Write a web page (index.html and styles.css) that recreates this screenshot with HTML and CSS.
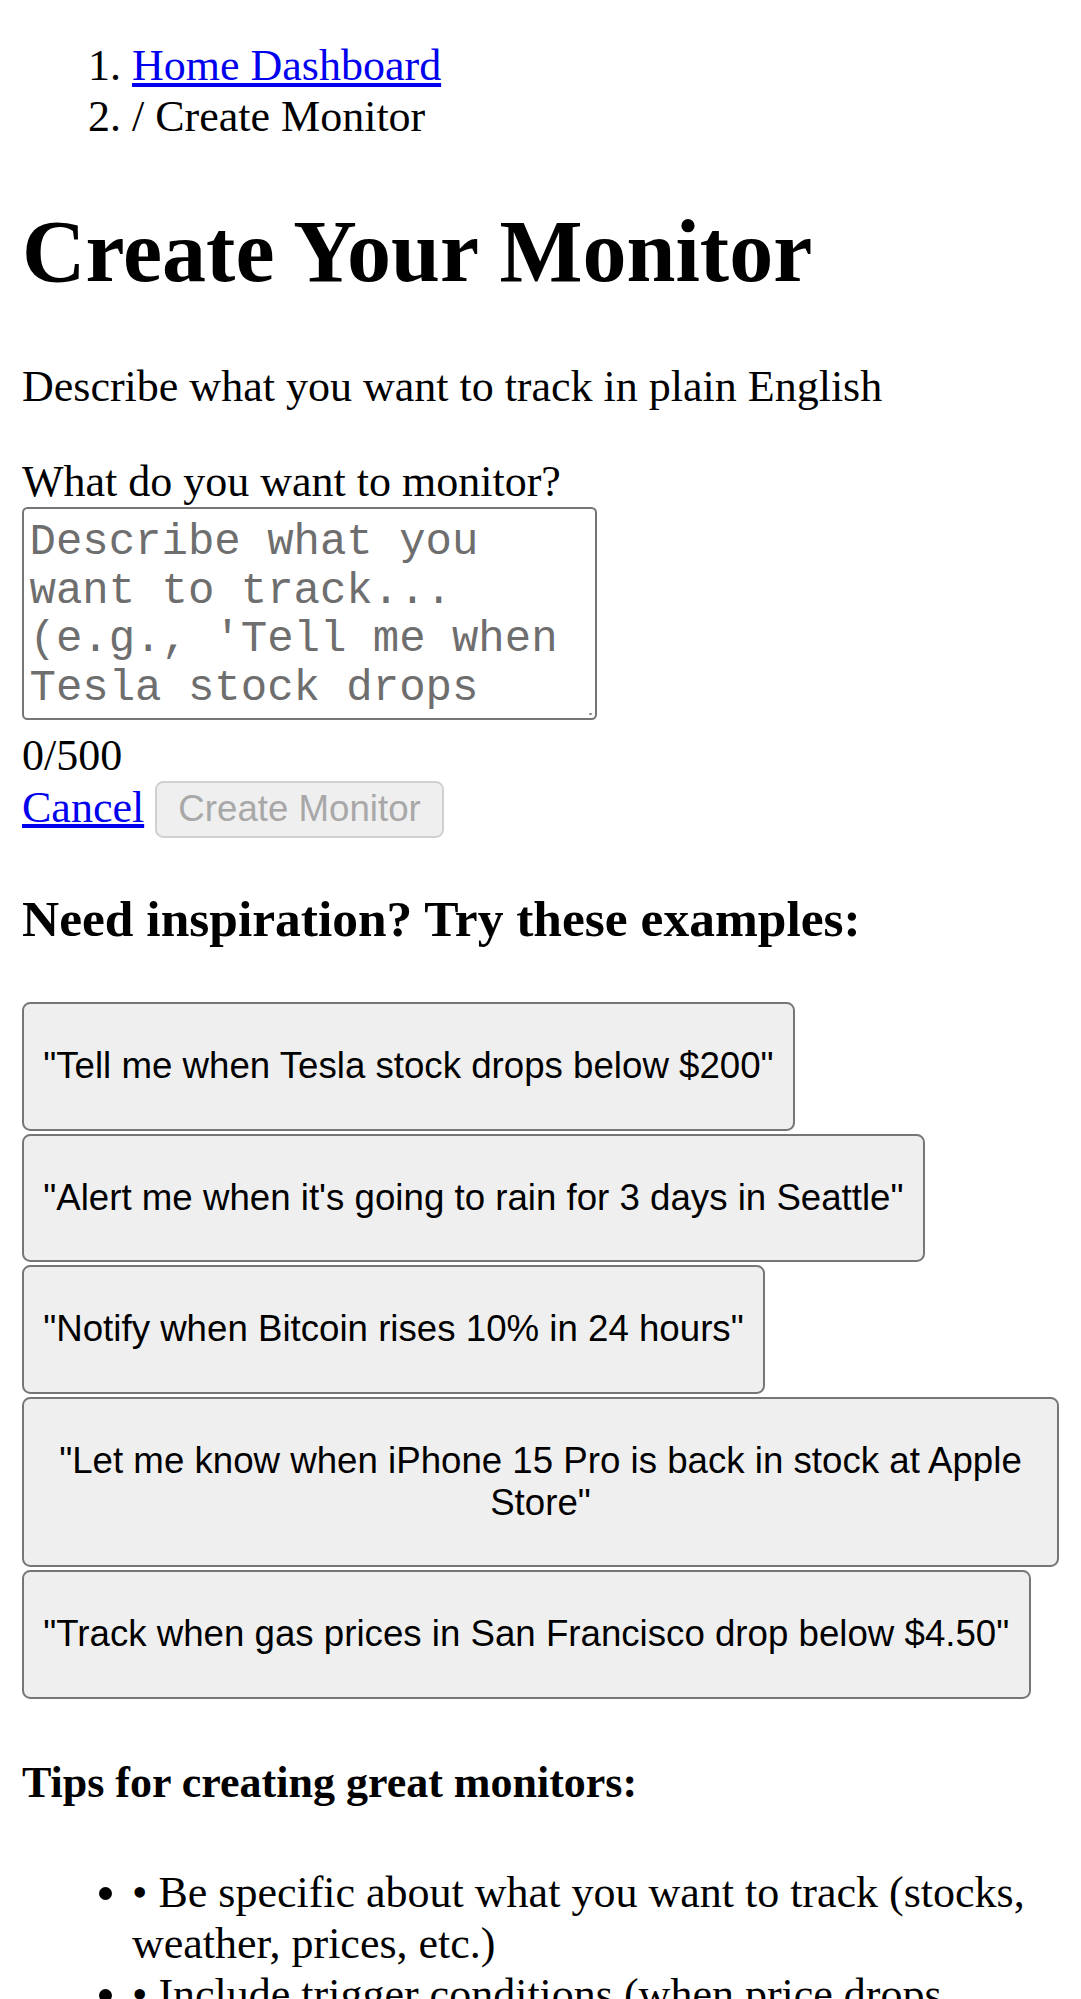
FILE: index.html
```html
<!DOCTYPE html>
<html lang="en">
<head>
<meta charset="utf-8">
<title>Create Monitor</title>
<link rel="stylesheet" href="styles.css">
</head>
<body>
<nav class="crumbs">
  <ol class="crumb-list">
    <li><a href="#" class="link">Home Dashboard</a></li>
    <li>/ Create Monitor</li>
  </ol>
</nav>
<main class="page">
  <h1 class="title">Create Your Monitor</h1>
  <p class="lead">Describe what you want to track in plain English</p>
  <form class="form">
    <div class="field">
      <label class="label" for="query">What do you want to monitor?</label>
      <div class="area-box"><textarea id="query" class="area" rows="4" maxlength="500" placeholder="Describe what you want to track... (e.g., 'Tell me when Tesla stock drops below $200')"></textarea></div>
      <div class="count">0/500</div>
    </div>
    <div class="actions"><a href="#" class="link">Cancel</a> <button type="submit" class="btn-submit" disabled>Create Monitor</button></div>
  </form>
  <h3 class="section">Need inspiration? Try these examples:</h3>
  <div class="examples">
    <button type="button" class="example">"Tell me when Tesla stock drops below $200"</button>
    <button type="button" class="example">"Alert me when it's going to rain for 3 days in Seattle"</button>
    <button type="button" class="example">"Notify when Bitcoin rises 10% in 24 hours"</button>
    <button type="button" class="example">"Let me know when iPhone 15 Pro is back in stock at Apple Store"</button>
    <button type="button" class="example">"Track when gas prices in San Francisco drop below $4.50"</button>
  </div>
  <h4 class="tips-title">Tips for creating great monitors:</h4>
  <ul class="tips">
    <li>• Be specific about what you want to track (stocks, weather, prices, etc.)</li>
    <li>• Include trigger conditions (when price drops below, rises above, etc.)</li>
    <li>• Mention locations or time frames when relevant</li>
  </ul>
</main>
</body>
</html>
```
FILE: styles.css
```css
html {
  zoom: 2.75;
}

body {
  margin: 0 8px 8px;
  font-family: "Liberation Serif", "Times New Roman", serif;
  font-size: 16px;
  color: #000;
  background: #fff;
}

.crumb-list {
  margin: 14.6px 0 16px;
  padding-left: 40px;
}

.link {
  color: #0000ee;
  text-decoration: underline;
}

.title {
  font-size: 32px;
  font-weight: bold;
  margin: 21.44px 0;
}

.lead {
  margin: 16px 0;
}

.form {
  margin: 0;
}

.label {
  display: block;
}

.area-box {
  position: relative;
  width: 209px;
  box-sizing: border-box;
  border: 1px solid #767676;
  border-radius: 2px;
  padding-bottom: 2px;
  margin-bottom: 3.6px;
  background: #fff;
}

.area-box::after {
  content: "";
  position: absolute;
  right: 1px;
  bottom: 1px;
  width: 1px;
  height: 1px;
  border-radius: 50%;
  background: #888;
}

.area {
  display: block;
  width: 100%;
  height: 74px;
  box-sizing: border-box;
  font-family: "Liberation Mono", "Courier New", monospace;
  font-size: 16px;
  line-height: 17.6px;
  border: 0;
  padding: 3.4px 2px 0;
  margin: 0;
  resize: none;
  outline: none;
  color: #000;
  background: transparent;
}

.area::placeholder {
  color: #6e6e6e;
}

.btn-submit {
  font-family: "Liberation Sans", Arial, sans-serif;
  font-size: 13.333px;
  padding: 2px 7.7px;
  margin: 0;
  border: 1px solid #d0d0d0;
  border-radius: 3px;
  background: #efefef;
  color: #a8a8a8;
}

.section {
  font-size: 18.72px;
  font-weight: bold;
  margin: 18.72px 0;
}

.examples {
  display: flex;
  flex-direction: column;
  align-items: flex-start;
  gap: 1.1px;
  padding-top: 0.8px;
}

.example {
  font-family: "Liberation Sans", Arial, sans-serif;
  font-size: 13.333px;
  padding: 15px 7px;
  margin: 0;
  border: 1px solid #767676;
  border-radius: 3px;
  background: #efefef;
  color: #000;
  text-align: center;
}

.tips-title {
  font-size: 16px;
  font-weight: bold;
  margin: 21.28px 0;
}

.tips {
  margin: 16px 0;
  padding-left: 40px;
}
```
